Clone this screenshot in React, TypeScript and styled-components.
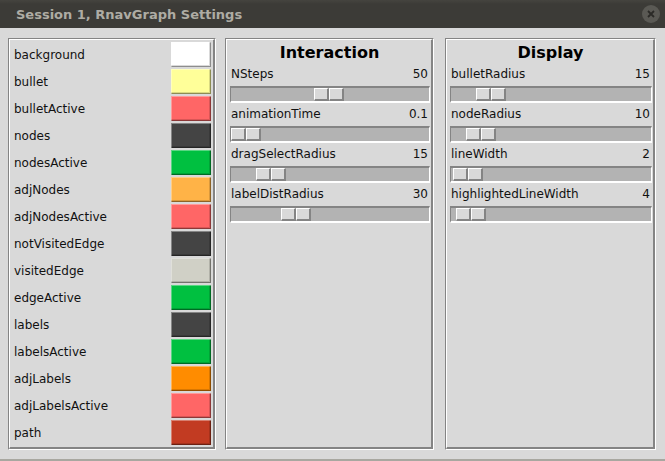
import React from "react";
import styled, { createGlobalStyle } from "styled-components";

const Global = createGlobalStyle`
  html, body { margin: 0; padding: 0; background: #d9d9d9; }
  body { font-family: "DejaVu Sans", sans-serif; }
`;

const Window = styled.div`
  width: 665px;
  height: 461px;
  display: flex;
  flex-direction: column;
  background: #d9d9d9;
  box-sizing: border-box;
  border-bottom: 2px solid #a8a7a0;
`;

const TitleBar = styled.div`
  height: 28px;
  flex: none;
  display: flex;
  align-items: center;
  justify-content: space-between;
  padding: 0 5px 0 16px;
  background: linear-gradient(#45443f 0px, #3c3b37 4px, #3c3b37 100%);
  color: #aeaca4;
  font: bold 13px "DejaVu Sans", sans-serif;
  box-sizing: border-box;
`;

const CloseBtn = styled.div`
  width: 18px;
  height: 18px;
  border-radius: 50%;
  background: #5a5954;
  display: flex;
  align-items: center;
  justify-content: center;
`;

const Body = styled.div`
  flex: 1;
  display: flex;
  padding: 10px 9px 9px 8px;
  gap: 9px;
`;

const Groove = styled.div<{ $w: number; $gapBefore?: number }>`
  width: ${(p) => p.$w}px;
  margin-left: ${(p) => p.$gapBefore ?? 0}px;
  box-sizing: border-box;
  border: 1px solid;
  border-color: #848484 #ffffff #ffffff #848484;
  display: flex;
`;

const PanelInner = styled.div`
  flex: 1;
  border: 1px solid;
  border-color: #ffffff #848484 #848484 #ffffff;
  border-width: 1px 2px 2px 1px;
  display: flex;
  flex-direction: column;
`;

const ColorList = styled.div`
  display: flex;
  flex-direction: column;
  gap: 2px;
  padding: 2px 2px 0 4px;
`;

const ColorRow = styled.div`
  display: flex;
  align-items: center;
  justify-content: space-between;
  height: 25px;
  font-size: 12px;
  color: #111;
`;

const Swatch = styled.div<{ $c: string }>`
  width: 40px;
  height: 25px;
  box-sizing: border-box;
  background: ${(p) => p.$c};
  box-shadow: inset 1px 1px 0 rgba(255, 255, 255, 0.35),
    inset -1px -1px 0 rgba(0, 0, 0, 0.35), inset -2px -2px 0 rgba(0, 0, 0, 0.15);
`;

const SliderPanel = styled.div`
  display: flex;
  flex-direction: column;
  padding: 0 1px 0 2px;
`;

const PanelTitle = styled.div`
  height: 24px;
  display: flex;
  align-items: center;
  justify-content: center;
  font: bold 16px "DejaVu Sans", sans-serif;
  color: #000;
`;

const ParamRow = styled.div`
  height: 20px;
  display: flex;
  align-items: center;
  justify-content: space-between;
  padding: 0 2px 0 2px;
  font-size: 12px;
  color: #111;
`;

const Trough = styled.div`
  position: relative;
  height: 17px;
  margin: 2px 0 1px 1px;
  box-sizing: border-box;
  background: #b3b3b3;
  border-style: solid;
  border-width: 2px 1px 2px 1px;
  border-color: #848484 #ffffff #ffffff #848484;
`;

const Thumb = styled.div<{ $left: number }>`
  position: absolute;
  top: 0;
  bottom: 0;
  left: ${(p) => p.$left}px;
  display: flex;
`;

const ThumbHalf = styled.div`
  width: 15px;
  box-sizing: border-box;
  background: #d9d9d9;
  border-style: solid;
  border-width: 1px 2px 2px 1px;
  border-color: #ffffff #848484 #848484 #ffffff;
`;

const colors: [string, string][] = [
  ["background", "#ffffff"],
  ["bullet", "#ffff99"],
  ["bulletActive", "#ff6666"],
  ["nodes", "#444444"],
  ["nodesActive", "#00c040"],
  ["adjNodes", "#ffb347"],
  ["adjNodesActive", "#ff6666"],
  ["notVisitedEdge", "#444444"],
  ["visitedEdge", "#d0d0c6"],
  ["edgeActive", "#00c040"],
  ["labels", "#444444"],
  ["labelsActive", "#00c040"],
  ["adjLabels", "#ff8c00"],
  ["adjLabelsActive", "#ff6666"],
  ["path", "#c23b22"],
];

type Param = { name: string; value: string; pos: number };

const interaction: Param[] = [
  { name: "NSteps", value: "50", pos: 83 },
  { name: "animationTime", value: "0.1", pos: 0 },
  { name: "dragSelectRadius", value: "15", pos: 25 },
  { name: "labelDistRadius", value: "30", pos: 50 },
];

const display: Param[] = [
  { name: "bulletRadius", value: "15", pos: 25 },
  { name: "nodeRadius", value: "10", pos: 15 },
  { name: "lineWidth", value: "2", pos: 2 },
  { name: "highlightedLineWidth", value: "4", pos: 5 },
];

function Sliders({ title, params }: { title: string; params: Param[] }) {
  return (
    <SliderPanel>
      <PanelTitle>{title}</PanelTitle>
      {params.map((p) => (
        <React.Fragment key={p.name}>
          <ParamRow>
            <span>{p.name}</span>
            <span>{p.value}</span>
          </ParamRow>
          <Trough>
            <Thumb $left={p.pos}>
              <ThumbHalf />
              <ThumbHalf />
            </Thumb>
          </Trough>
        </React.Fragment>
      ))}
    </SliderPanel>
  );
}

export default function App() {
  return (
    <>
      <Global />
      <Window>
        <TitleBar>
          <span>Session 1, RnavGraph Settings</span>
          <CloseBtn>
            <svg width="8" height="8" viewBox="0 0 8 8">
              <path d="M1 1 L7 7 M7 1 L1 7" stroke="#2b2a27" strokeWidth="1.8" />
            </svg>
          </CloseBtn>
        </TitleBar>
        <Body>
          <Groove $w={208}>
            <PanelInner>
              <ColorList>
                {colors.map(([n, c]) => (
                  <ColorRow key={n}>
                    <span>{n}</span>
                    <Swatch $c={c} />
                  </ColorRow>
                ))}
              </ColorList>
            </PanelInner>
          </Groove>
          <Groove $w={209}>
            <PanelInner>
              <Sliders title="Interaction" params={interaction} />
            </PanelInner>
          </Groove>
          <Groove $w={211} $gapBefore={2}>
            <PanelInner>
              <Sliders title="Display" params={display} />
            </PanelInner>
          </Groove>
        </Body>
      </Window>
    </>
  );
}
